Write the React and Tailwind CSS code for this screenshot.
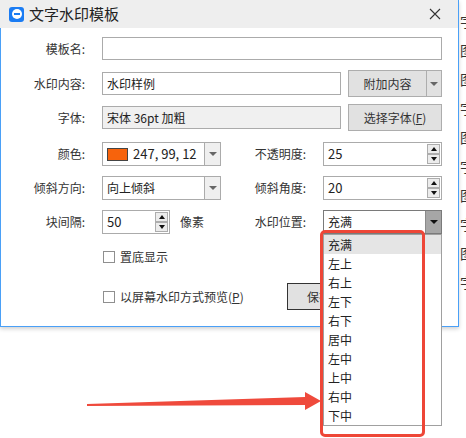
import React from "react";

const cjk = "font-['Microsoft_YaHei','Noto_Sans_CJK_SC','Noto_Sans',sans-serif]";

function Caret({ dark }) {
  return (
    <span
      className={
        "block w-0 h-0 border-x-[4px] border-x-transparent border-t-[4px] " +
        (dark ? "border-t-[#111]" : "border-t-[#666]")
      }
    />
  );
}

function Field({ w, value, disabled }) {
  return (
    <div
      className={
        "h-[23px] border border-[#ababab] flex items-center px-[4px] text-[12px] text-[#222] " +
        (disabled ? "bg-[#f0f0f0]" : "bg-white")
      }
      style={{ width: w }}
    >
      {value}
    </div>
  );
}

function Combo({ w, children, open }) {
  return (
    <div
      className={
        "h-[24px] border flex bg-white text-[12px] text-[#222] " +
        (open ? "border-[#7a7a7a]" : "border-[#ababab]")
      }
      style={{ width: w }}
    >
      <div className="flex-1 flex items-center px-[4px]">{children}</div>
      <div
        className={
          "w-[16px] flex items-center justify-center border-l " +
          (open ? "bg-[#a6a6a6] border-[#8a8a8a]" : "bg-[#efefef] border-[#ababab]")
        }
      >
        <Caret dark={open} />
      </div>
    </div>
  );
}

function SpinArrow({ up }) {
  return (
    <div className="w-[13px] h-[10px] border border-[#adadad] bg-[#ececec] flex items-center justify-center">
      <span
        className={
          "block w-0 h-0 border-x-[3.5px] border-x-transparent " +
          (up ? "border-b-[4px] border-b-[#111]" : "border-t-[4px] border-t-[#111]")
        }
      />
    </div>
  );
}

function Spinner({ w, value }) {
  return (
    <div
      className="h-[24px] border border-[#ababab] bg-white flex items-center pl-[4px] pr-[1px] text-[13px] text-[#222]"
      style={{ width: w }}
    >
      <span className="flex-1">{value}</span>
      <div className="flex flex-col">
        <SpinArrow up />
        <SpinArrow />
      </div>
    </div>
  );
}

function Button({ w, children, strong }) {
  return (
    <div
      className={
        "h-[27px] flex items-center justify-center bg-[#e1e1e1] text-[12px] text-[#333] border " +
        (strong ? "border-[#333]" : "border-[#adadad]")
      }
      style={{ width: w }}
    >
      {children}
    </div>
  );
}

function Label({ w, children }) {
  return (
    <span className="text-right text-[12px] text-[#333] shrink-0" style={{ width: w }}>
      {children}
    </span>
  );
}

function Checkbox({ children }) {
  return (
    <div className="flex items-center">
      <span className="w-[12px] h-[12px] border border-[#8f8f8f] bg-white" />
      <span className="ml-[5px] text-[12px] text-[#333]">{children}</span>
    </div>
  );
}

const positions = ["充满", "左上", "右上", "左下", "右下", "居中", "左中", "上中", "右中", "下中"];
const behind = ["字", "图", "图", "字", "图", "字", "图", "字", "图", "字"];

export default function App() {
  return (
    <div className={"relative w-[466px] h-[438px] overflow-hidden bg-white flex items-start " + cjk}>
      {/* dialog */}
      <div className="w-[459px] h-[327px] flex flex-col shrink-0 shadow-[0_2px_4px_rgba(0,0,0,0.18)] z-10 bg-white">
        <div className="h-[28px] bg-[#eeeeee] flex items-center border-r border-[#4aa0f7]">
          <div className="ml-[9px] w-[15px] h-[15px] rounded-[3px] bg-[#1b7cf3] flex items-center justify-center">
            <div className="w-[10px] h-[10px] rounded-full bg-white flex items-center justify-center">
              <div className="w-[6px] h-[2px] bg-[#1b7cf3]" />
            </div>
          </div>
          <span className="ml-[5px] text-[15px] text-[#222]">文字水印模板</span>
          <svg className="ml-auto mr-[17px]" width="12" height="12" viewBox="0 0 12 12">
            <path d="M1 1 L11 11 M11 1 L1 11" stroke="#333" strokeWidth="1.1" fill="none" />
          </svg>
        </div>

        <div className="flex-1 border-x border-b border-[#4aa0f7] pt-[9px] flex flex-col">
          <div className="h-[23px] flex items-center">
            <Label w={84}>模板名:</Label>
            <div className="ml-[17px]">
              <Field w={340} value="" />
            </div>
          </div>

          <div className="h-[27px] mt-[10px] flex items-center">
            <Label w={84}>水印内容:</Label>
            <div className="ml-[17px]">
              <Field w={239} value="水印样例" />
            </div>
            <div className="ml-[7px] h-[27px] w-[94px] flex border border-[#adadad] bg-[#e1e1e1] text-[12px] text-[#333]">
              <span className="flex-1 flex items-center justify-center">附加内容</span>
              <span className="w-[15px] border-l border-[#adadad] flex items-center justify-center">
                <Caret />
              </span>
            </div>
          </div>

          <div className="h-[27px] mt-[7px] flex items-center">
            <Label w={84}>字体:</Label>
            <div className="ml-[17px]">
              <Field w={239} value="宋体 36pt 加粗" disabled />
            </div>
            <div className="ml-[7px]">
              <Button w={94}>
                选择字体(<span className="underline">F</span>)
              </Button>
            </div>
          </div>

          <div className="h-[24px] mt-[11px] flex items-center">
            <Label w={84}>颜色:</Label>
            <div className="ml-[17px]">
              <Combo w={119}>
                <span className="w-[21px] h-[13px] border border-[#444] bg-[#f7630c] mr-[5px]" />
                <span className="text-[13px]">247, 99, 12</span>
              </Combo>
            </div>
            <Label w={85}>不透明度:</Label>
            <div className="ml-[17px]">
              <Spinner w={119} value="25" />
            </div>
          </div>

          <div className="h-[24px] mt-[10px] flex items-center">
            <Label w={84}>倾斜方向:</Label>
            <div className="ml-[17px]">
              <Combo w={119}>向上倾斜</Combo>
            </div>
            <Label w={85}>倾斜角度:</Label>
            <div className="ml-[17px]">
              <Spinner w={119} value="20" />
            </div>
          </div>

          <div className="h-[24px] mt-[10px] flex items-center">
            <Label w={84}>块间隔:</Label>
            <div className="ml-[17px]">
              <Spinner w={68} value="50" />
            </div>
            <span className="ml-[10px] w-[41px] text-[12px] text-[#333]">像素</span>
            <Label w={85}>水印位置:</Label>
            <div className="ml-[17px]">
              <Combo w={119} open>
                充满
              </Combo>
            </div>
          </div>

          <div className="h-[16px] mt-[15px] flex items-center pl-[102px]">
            <Checkbox>置底显示</Checkbox>
          </div>

          <div className="h-[27px] mt-[18px] flex items-center pl-[102px]">
            <div className="w-[184px]">
              <Checkbox>
                以屏幕水印方式预览(<span className="underline">P</span>)
              </Checkbox>
            </div>
            <Button w={64} strong>
              保存
            </Button>
          </div>
        </div>
      </div>

      {/* list of the window behind */}
      <div className="flex-1 flex flex-col pt-[11px] text-[14px] text-[#333] whitespace-nowrap overflow-hidden">
        {behind.map((c, i) => (
          <div key={i} className="h-[29px] leading-[20px] pl-[1px]">
            {c}
          </div>
        ))}
      </div>

      {/* open dropdown of 水印位置 */}
      <div className="absolute left-[323px] top-[234px] w-[119px] h-[192px] z-20 bg-white border border-[#a0a0a0] text-[12px] text-[#222]">
        {positions.map((p, i) => (
          <div
            key={p}
            className={"h-[19px] flex items-center pl-[4px] " + (i === 0 ? "bg-[#e5e5e5]" : "")}
          >
            {p}
          </div>
        ))}
      </div>

      {/* annotation */}
      <div className="absolute left-[320px] top-[230px] w-[105px] h-[207px] z-30 border-[3px] border-[#ee4637] rounded-[5px]" />
      <svg className="absolute left-0 top-0 z-30 pointer-events-none" width="466" height="438">
        <polygon points="87,404 305,397 305,392 321,401 305,410 305,405 87,406" fill="#ef4a3c" />
      </svg>
    </div>
  );
}
